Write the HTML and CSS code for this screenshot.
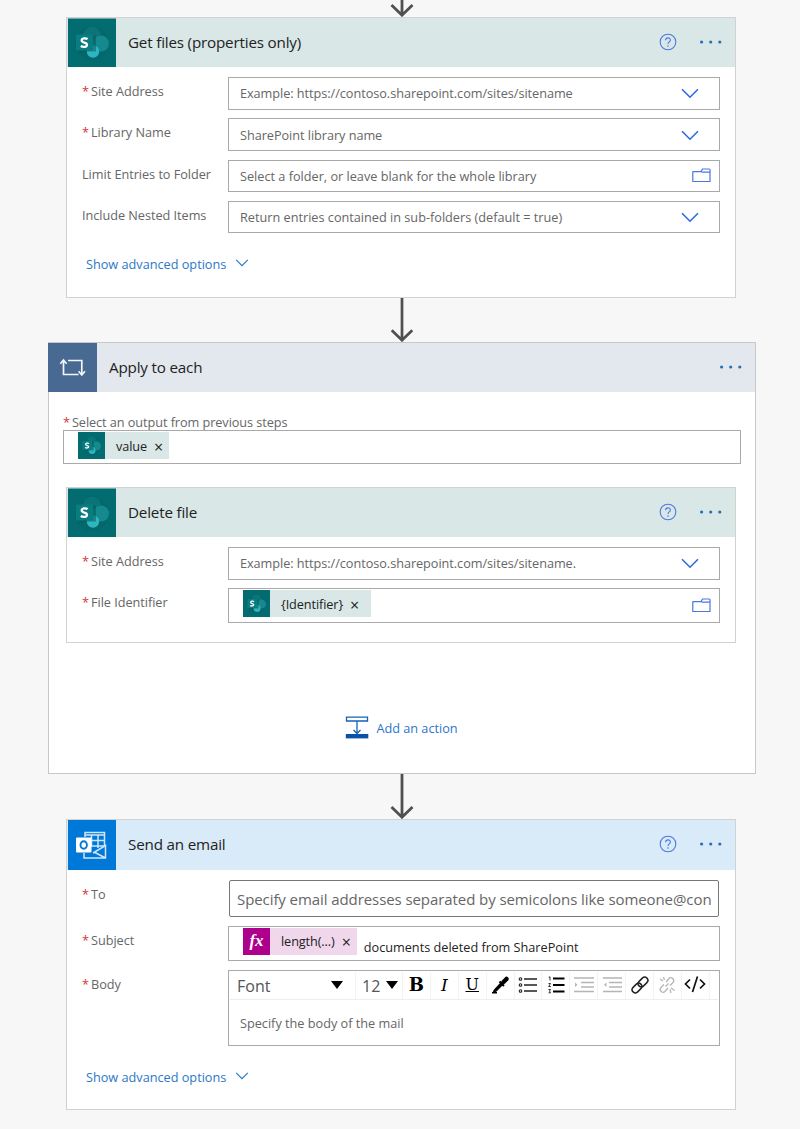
FILE: index.html
```html
<!DOCTYPE html>
<html lang="en">
<head>
  <meta charset="UTF-8">
  <meta name="viewport" content="width=device-width, initial-scale=1.0">
  <title>Edit your flow</title>
  <link rel="stylesheet" href="styles.css">
</head>
<body>

  <!-- shared icons -->
  <svg class="sprite" width="0" height="0">
    <symbol id="sharepoint" viewBox="0 0 48 48">
      <rect width="48" height="49" fill="#036c70"/>
      <circle cx="24" cy="25" r="17" fill="#02595c" opacity=".25"/>
      <circle cx="24" cy="17" r="9" fill="#0b7478"/>
      <circle cx="33" cy="25" r="8" fill="#15898d"/>
      <circle cx="25" cy="33" r="6.2" fill="#2fb5bf"/>
      <rect x="11" y="17" width="17" height="16" fill="#025558" opacity=".5"/>
      <rect x="8" y="16" width="17" height="16" rx="1" fill="#0a7d81"/>
      <path d="M19.600 20.600 C17.500 19.300 13.700 19.600 13.700 22 C13.700 24.600 19 23.500 19 26.300 C19 28.900 14.800 28.900 12.800 27.500" fill="none" stroke="#fff" stroke-width="2.300"/>
    </symbol>
    <symbol id="chevron" viewBox="0 0 18 11">
      <path d="M1 1.2 L9 9.2 L17 1.2" fill="none" stroke="currentColor" stroke-width="1.6"/>
    </symbol>
    <symbol id="folder" viewBox="0 0 19 15">
      <path d="M.8 3.600 H9 M18 3 V13.500 H.8 V3.200 M9 3.600 L10.500 1 H17 Q18.200 1 18.200 2.500 Q18.200 4.200 17 4.200 H10.300 L9 3.400" fill="none" stroke="currentColor" stroke-width="1.2"/>
    </symbol>
    <symbol id="help" viewBox="0 0 18 18">
      <circle cx="9" cy="9" r="7.8" fill="none" stroke="currentColor" stroke-width="1.1"/>
      <path d="M6.6 7.2 C6.6 4.1 11.4 4.1 11.4 7.1 C11.4 9 9 8.9 9 11" fill="none" stroke="currentColor" stroke-width="1.1"/>
      <circle cx="9" cy="13" r=".8" fill="currentColor"/>
    </symbol>
    <symbol id="dots" viewBox="0 0 24 4">
      <circle cx="2.6" cy="2" r="1.6"/><circle cx="11.7" cy="2" r="1.6"/><circle cx="20.8" cy="2" r="1.6"/>
    </symbol>
    <symbol id="arrow" viewBox="0 0 24 45">
      <path d="M12 0 V43 M1.5 33 L12 43.2 L22.5 33" fill="none" stroke="#505050" stroke-width="2.8"/>
    </symbol>
  </svg>

  <div class="flow">
    <svg class="arrow arrow-top" viewBox="0 28 24 17"><use href="#arrow" width="24" height="45"/></svg>

    <div class="card get-files">
      <div class="card-header sp">
        <svg class="logo"><use href="#sharepoint"/></svg>
        <span class="title">Get files (properties only)</span>
        <svg class="help"><use href="#help"/></svg>
        <svg class="dots"><use href="#dots"/></svg>
      </div>
      <div class="fields">
        <div class="row">
          <label class="required">Site Address</label>
          <div class="input"><span class="t-example">Example: https://contoso.sharepoint.com/sites/sitename</span><svg class="chevron"><use href="#chevron"/></svg></div>
        </div>
        <div class="row">
          <label class="required">Library Name</label>
          <div class="input"><span class="t-example">SharePoint library name</span><svg class="chevron"><use href="#chevron"/></svg></div>
        </div>
        <div class="row">
          <label>Limit Entries to Folder</label>
          <div class="input"><span>Select a folder, or leave blank for the whole library</span><svg class="folder"><use href="#folder"/></svg></div>
        </div>
        <div class="row">
          <label>Include Nested Items</label>
          <div class="input"><span>Return entries contained in sub-folders (default = true)</span><svg class="chevron"><use href="#chevron"/></svg></div>
        </div>
      </div>
      <a class="advanced">Show advanced options <svg><use href="#chevron"/></svg></a>
    </div>

    <svg class="arrow arrow-short"><use href="#arrow"/></svg>

    <div class="scope">
      <div class="card-header loop">
        <svg class="logo" viewBox="0 0 49 49">
          <rect width="49" height="49" fill="#486991"/>
          <path d="M15.500 17.500 V31.500 H30.500 M12.300 20.800 L15.500 17 L18.700 20.800 M20 17.500 H33.800 V31.500 M30.600 28.200 L33.800 32 L37 28.200" fill="none" stroke="#f2f5f9" stroke-width="1.700"/>
        </svg>
        <span class="title">Apply to each</span>
        <svg class="dots"><use href="#dots"/></svg>
      </div>
      <div class="scope-body">
        <label class="required">Select an output from previous steps</label>
        <div class="input output">
          <div class="token"><svg><use href="#sharepoint"/></svg><span>value</span><i>×</i></div>
        </div>

        <div class="card delete-file">
          <div class="card-header sp">
            <svg class="logo"><use href="#sharepoint"/></svg>
            <span class="title">Delete file</span>
            <svg class="help"><use href="#help"/></svg>
            <svg class="dots"><use href="#dots"/></svg>
          </div>
          <div class="fields">
            <div class="row">
              <label class="required">Site Address</label>
              <div class="input"><span class="t-example">Example: https://contoso.sharepoint.com/sites/sitename.</span><svg class="chevron"><use href="#chevron"/></svg></div>
            </div>
            <div class="row tall">
              <label class="required">File Identifier</label>
              <div class="input">
                <div class="token identifier"><svg><use href="#sharepoint"/></svg><span>{Identifier}</span><i>×</i></div>
                <svg class="folder"><use href="#folder"/></svg>
              </div>
            </div>
          </div>
        </div>

        <a class="add-action">
          <svg viewBox="0 0 24 23">
            <path d="M1.500 1.200 H22.500 V5 H1.500 Z M12 5 V17 M8.500 14 L12 17.500 L15.500 14" fill="none" stroke="#1461b8" stroke-width="1.300"/>
            <rect x=".8" y="18" width="22.500" height="4.400" fill="#0a51a8"/>
          </svg>
          Add an action
        </a>
      </div>
    </div>

    <svg class="arrow"><use href="#arrow"/></svg>

    <div class="card send-email">
      <div class="card-header mail">
        <svg class="logo" viewBox="0 0 48 50">
          <rect width="48" height="50" fill="#0078d7"/>
          <path d="M17 17 V12.500 H36.500 V26 M17 15 H36.500 M23.500 15 V26 M30 15 V28 M23 20.500 H36.500 M23 26 H36.500 M16 33 V38 H37.500 V25.500 L25 33 M26 32 L37.500 38" fill="none" stroke="#cfe6fa" stroke-width="1.500"/>
          <rect x="8" y="17.500" width="15.500" height="15" rx="1" fill="#fff"/>
          <ellipse cx="15.700" cy="25" rx="3.200" ry="3.700" fill="none" stroke="#0078d7" stroke-width="1.900"/>
        </svg>
        <span class="title">Send an email</span>
        <svg class="help"><use href="#help"/></svg>
        <svg class="dots"><use href="#dots"/></svg>
      </div>
      <div class="fields">
        <div class="row to">
          <label class="required">To</label>
          <div class="input"><span>Specify email addresses separated by semicolons like someone@con</span></div>
        </div>
        <div class="row tall">
          <label class="required">Subject</label>
          <div class="input">
            <div class="token fx"><b>fx</b><span>length(...)</span><i>×</i></div>
            <span class="subject-text">documents deleted from SharePoint</span>
          </div>
        </div>
        <div class="row body-row">
          <label class="required">Body</label>
          <div class="editor">
            <div class="toolbar">
              <div class="tool font-name">Font <svg viewBox="0 0 12 8"><path d="M0 0 H12 L6 8 Z"/></svg></div>
              <div class="tool font-size">12 <svg viewBox="0 0 12 8"><path d="M0 0 H12 L6 8 Z"/></svg></div>
              <div class="tool bold">B</div>
              <div class="tool italic">I</div>
              <div class="tool underline">U</div>
              <div class="tool">
                <svg viewBox="0 0 20 20"><path d="M2 18.500 L4 14.500 L10.500 7.500 L13 10 L6.500 16.500 Z M2 17 H7 V18.500 H2 Z"/><path d="M9.500 6.500 L14 11 M12 8.500 L16.500 4" stroke="#000" stroke-width="2"/><path d="M13.500 7 L16.500 4" stroke="#000" stroke-width="4.500" stroke-linecap="round"/></svg>
              </div>
              <div class="tool">
                <svg viewBox="0 0 20 20"><path d="M6 4 H19 M6 10 H19 M6 16 H19" stroke="#222" stroke-width="1.300"/><g fill="none" stroke="#222" stroke-width="1.100"><circle cx="2.500" cy="4" r="1.300"/><circle cx="2.500" cy="10" r="1.300"/><circle cx="2.500" cy="16" r="1.300"/></g></svg>
              </div>
              <div class="tool">
                <svg viewBox="0 0 20 20"><path d="M7 3.500 H18.500 M7 10 H18.500 M7 16.500 H18.500" stroke="#000" stroke-width="2"/><path d="M2.700 2.500 L4 1.800 V5.500 M2.500 8.500 H4.500 L2.700 11.500 H4.800 M2.500 14.500 H4.500 L3.500 16 L4.500 17.800 H2.500" fill="none" stroke="#000" stroke-width=".8"/></svg>
              </div>
              <div class="tool muted">
                <svg viewBox="0 0 20 20"><path d="M0 3 H20 M7 7.500 H20 M7 12 H20 M0 16.500 H20" stroke="currentColor" stroke-width="1.500"/><path d="M1 7.500 L3.500 9.700 L1 12 Z"/></svg>
              </div>
              <div class="tool muted">
                <svg viewBox="0 0 20 20"><path d="M1 3 H20 M7 7.500 H20 M7 12 H20 M1 16.500 H20" stroke="currentColor" stroke-width="1.500"/><path d="M4.500 7.500 L2 9.700 L4.500 12 Z"/></svg>
              </div>
              <div class="tool">
                <svg viewBox="0 0 20 20"><g fill="none" stroke="#222" stroke-width="1.500"><rect x="7.500" y="3.800" width="11" height="6.400" rx="3.200" transform="rotate(-45 13 7)"/><rect x="1.500" y="9.800" width="11" height="6.400" rx="3.200" transform="rotate(-45 7 13)"/></g></svg>
              </div>
              <div class="tool muted">
                <svg viewBox="0 0 20 20"><g fill="none" stroke="currentColor" stroke-width="1.300"><path d="M9 7 L12 3.500 C14.500 1.200 18.500 5 16 7.500 L13 10.500 M11 13 L8 16.500 C5.500 19 1.500 15 4 12.500 L7 9.500 M8.500 11.500 L11.500 8.500 M3 4 L6 6 M6.500 2 L7.500 5 M14 13 L17.500 15.500 M13 14.500 L14 18"/></g></svg>
              </div>
              <div class="tool">
                <svg class="code" viewBox="0 0 24 20"><path d="M7 4.500 L2.500 9 L7 13.500 M17 4.500 L21.500 9 L17 13.500 M14.500 1.500 L9.500 17" fill="none" stroke="#111" stroke-width="1.700"/></svg>
              </div>
            </div>
            <div class="editor-text">Specify the body of the mail</div>
          </div>
        </div>
      </div>
      <a class="advanced">Show advanced options <svg><use href="#chevron"/></svg></a>
    </div>
  </div>

</body>
</html>
```
FILE: styles.css
```css
* {
  box-sizing: border-box;
}
body {
  margin: 0;
  background: #f7f7f7;
  color: #666;
  font-family: "Open Sans", "Noto Sans", sans-serif;
  font-size: 12.7px;
  line-height: 18px;
}
svg {
  display: block;
  flex: none;
}
.sprite {
  position: absolute;
}
.flow {
  width: 708px;
  height: 1129px;
  margin-left: 48px;
  overflow: hidden;
}
.arrow {
  width: 24px;
  height: 45px;
  margin-left: 341.5px;
}
.arrow-top {
  height: 17px;
}
.arrow-short {
  height: 44px;
}

/* cards */
.card {
  width: 670px;
  margin-left: 18px;
  background: #fff;
  border: 1px solid #d2d2d2;
}
.get-files {
  height: 281px;
}
.send-email {
  height: 291px;
}
.card-header {
  height: 49px;
  display: flex;
  align-items: center;
  padding: 0 12px 0 1px;
}
.sp {
  background: #d9e7e7;
}
.loop {
  background: #e3e7ee;
  margin-left: -1px;
  padding-left: 0;
}
.mail {
  background: #d9eaf8;
  height: 50px;
}
.logo {
  width: 48px;
  height: 100%;
}
.loop .logo {
  width: 49px;
}
.title {
  flex: 1;
  margin: 0 0 2px 12px;
  font-size: 15.2px;
  letter-spacing: -.18px;
  color: #222;
}
.help {
  width: 18px;
  height: 18px;
  margin: 0 22px 2px 0;
  color: #4a78e0;
}
.dots {
  width: 24px;
  height: 4px;
  margin-bottom: 2px;
  fill: #2a6fb5;
}

/* fields */
.fields {
  padding: 10px 15px 0;
  display: flex;
  flex-direction: column;
  gap: 8.8px;
}
.row {
  display: flex;
  height: 32.5px;
}
.row label {
  width: 146px;
  flex: none;
  padding-top: 5px;
  letter-spacing: -.03px;
}
.required::before {
  content: "*";
  color: #d13438;
  margin-right: 2px;
}
.input {
  flex: 1;
  min-width: 0;
  display: flex;
  align-items: center;
  justify-content: space-between;
  border: 1px solid #aaa;
  background: #fff;
  padding: 0 8px 0 11px;
  white-space: nowrap;
}
.t-example {
  letter-spacing: -.04px;
}
.chevron {
  width: 18px;
  height: 11px;
  margin: 1px 12px 0 0;
  color: #2f6ae0;
}
.folder {
  width: 19px;
  height: 15px;
  color: #4a78e0;
}
.tall {
  height: 35px;
}
.advanced {
  display: flex;
  align-items: center;
  gap: 9px;
  margin: 22px 0 0 19px;
  color: #2b77c9;
}
.advanced svg {
  width: 14px;
  height: 8px;
  margin-bottom: 2px;
}

/* tokens */
.token {
  display: flex;
  align-items: center;
  align-self: flex-start;
  height: 27px;
  margin-top: 1px;
  background: #d9e7e7;
  color: #222;
  letter-spacing: -.1px;
}
.token svg,
.token b {
  width: 27px;
  height: 27px;
}
.token span {
  margin-left: 11px;
}
.token i {
  font-style: normal;
  font-size: 16px;
  margin: 2px 6px 0 7px;
}
.identifier,
.fx {
  margin-left: 3px;
}
.identifier {
  padding-right: 6px;
}
.fx {
  background: #f0d7ec;
}
.fx b {
  background: #ad008c;
  color: #fff;
  font: italic 700 17px/25px "Liberation Serif", serif;
  text-align: center;
}

/* apply to each */
.scope {
  height: 432px;
  background: #fff;
  border: 1px solid #c8c8c8;
}
.scope-body {
  padding: 21px 14px 0;
}
.scope-body > label {
  display: block;
  letter-spacing: -.06px;
}
.output {
  height: 34px;
  padding-left: 14px;
  margin-top: -1px;
}
.delete-file {
  height: 156px;
  margin: 23px 0 0 3px;
}
.add-action {
  display: flex;
  align-items: center;
  justify-content: center;
  gap: 7px;
  margin: 73px 1px 0 0;
  color: #2b77c9;
}
.add-action svg {
  width: 24px;
  height: 23px;
}

/* send an email */
.to {
  height: 37px;
}
.to .input {
  margin: 0 1px;
  border-color: #777;
  border-radius: 2px;
  padding: 0 7px;
  font-size: 15px;
  letter-spacing: -.08px;
}
.subject-text {
  flex: 1;
  margin: 7px 0 0 7px;
  color: #222;
}
.body-row {
  height: 76px;
}
.editor {
  flex: 1;
  border: 1px solid #aaa;
}
.toolbar {
  display: flex;
  height: 28px;
  margin: 1px;
  border-bottom: 1px solid #eee;
}
.tool {
  width: 27.9px;
  display: flex;
  align-items: center;
  justify-content: center;
  border-right: 1px solid #f3f3f3;
  color: #000;
}
.tool svg {
  width: 20px;
  height: 20px;
}
.tool .code {
  width: 24px;
}
.tool.muted {
  color: #b5b5b5;
  fill: #b5b5b5;
}
.tool.font-name,
.tool.font-size {
  width: 126px;
  padding: 2px 12px 0 7px;
  justify-content: space-between;
  font-size: 16px;
  color: #555;
}
.tool.font-size {
  width: 47px;
  padding: 2px 4px 0 6px;
}
.tool.font-name svg,
.tool.font-size svg {
  width: 12px;
  height: 8px;
  margin-bottom: 2px;
}
.bold,
.italic,
.underline {
  font-family: "DejaVu Serif", serif;
  font-size: 18px;
}
.bold {
  font-weight: 700;
}
.italic {
  font-size: 17px;
  font-style: italic;
}
.underline {
  font-size: 16px;
  text-decoration: underline;
}
.editor-text {
  padding: 13px 11px;
}
```
